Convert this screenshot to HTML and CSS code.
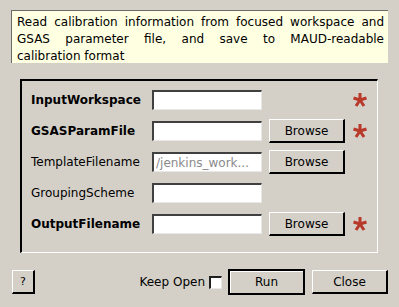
FILE: index.html
```html
<!DOCTYPE html>
<html lang="en">

<head>
    <meta charset="UTF-8">
    <title>SaveGSASInstrumentFile dialog</title>
    <link rel="stylesheet" href="styles.css">
</head>

<body>
    <div id="dialog">
        <p class="summary"><span class="full">Read calibration information from focused workspace and GSAS parameter file, and save to MAUD-readable</span>calibration format</p>

        <div class="group">
            <div class="form">
                <label class="req">InputWorkspace</label>
                <input type="text">
                <span></span>
                <span class="star"><svg viewBox="0 0 16 16"><path d="M8 1V8M8 8L14.5 6M8 8L12 14M8 8L4 14M8 8L1.5 6"/></svg></span>

                <label class="req">GSASParamFile</label>
                <input type="text">
                <button>Browse</button>
                <span class="star"><svg viewBox="0 0 16 16"><path d="M8 1V8M8 8L14.5 6M8 8L12 14M8 8L4 14M8 8L1.5 6"/></svg></span>

                <label>TemplateFilename</label>
                <input type="text" placeholder="/jenkins_work...">
                <button>Browse</button>
                <span></span>

                <label>GroupingScheme</label>
                <input type="text">
                <span></span>
                <span></span>

                <label class="req">OutputFilename</label>
                <input type="text">
                <button>Browse</button>
                <span class="star"><svg viewBox="0 0 16 16"><path d="M8 1V8M8 8L14.5 6M8 8L12 14M8 8L4 14M8 8L1.5 6"/></svg></span>
            </div>
        </div>

        <div class="footer">
            <button class="help">?</button>
            <span class="spacer"></span>
            <label class="keep">Keep Open <input type="checkbox"></label>
            <button class="run">Run</button>
            <button class="close">Close</button>
        </div>
    </div>
</body>

</html>
```

FILE: styles.css
```css
html {
    font-family: 'DejaVu Sans', sans-serif;
    font-size: 12px;
}

body {
    margin: 0;
    background: #d4d0c8;
    color: #000;
}

#dialog {
    display: flex;
    flex-direction: column;
    padding: 10px 11px 0 11px;
}

.summary {
    margin: 0;
    height: 53px;
    box-sizing: border-box;
    padding: 3px 4px 0 5px;
    line-height: 17px;
    text-align: justify;
    background: #ffffe1;
    border-top: 1px solid #6a6a6a;
    border-left: 1px solid #6a6a6a;
}

.summary .full {
    display: block;
    text-align-last: justify;
}

.group {
    margin: 16px 10px 0 9px;
    height: 174px;
    box-sizing: border-box;
    border-top: 2px solid #000;
    border-left: 2px solid #000;
    border-right: 1px solid #fff;
    border-bottom: 1px solid #fff;
    padding: 7px 0 0 9px;
}

.form {
    display: grid;
    grid-template-columns: 114px 110px 76px 22px;
    grid-auto-rows: 24px;
    column-gap: 7px;
    row-gap: 7px;
    align-items: center;
}

.form label {
    white-space: nowrap;
}

.form label.req {
    font-weight: bold;
}

input[type=text] {
    height: 20px;
    width: 110px;
    box-sizing: border-box;
    margin: 0;
    padding: 0 2px;
    font: inherit;
    background: #fff;
    border-top: 2px solid #404040;
    border-left: 2px solid #404040;
    border-right: 1px solid #e8e8e8;
    border-bottom: 1px solid #e8e8e8;
    outline: none;
}

input::placeholder {
    color: #8a8a8a;
}

button {
    height: 24px;
    box-sizing: border-box;
    margin: 0;
    padding: 0;
    font: inherit;
    color: #000;
    background: #d4d0c8;
    border-top: 1px solid #fff;
    border-left: 1px solid #fff;
    border-right: 2px solid #000;
    border-bottom: 2px solid #000;
}

.star {
    display: flex;
    align-items: center;
}

.star svg {
    width: 16px;
    height: 16px;
}

.star path {
    fill: none;
    stroke: #b8382a;
    stroke-width: 3;
}

.footer {
    display: flex;
    align-items: center;
    margin-top: 16px;
    height: 26px;
    padding-left: 1px;
}

.help {
    width: 23px;
    font-size: 11px;
}

.spacer {
    flex: 1;
}

.keep {
    display: flex;
    align-items: center;
    gap: 4px;
    margin-right: 6px;
}

.keep input {
    width: 13px;
    height: 13px;
    margin: 0;
    appearance: none;
    background: #fff;
    border-top: 2px solid #202020;
    border-left: 2px solid #202020;
    border-right: 1px solid #e8e8e8;
    border-bottom: 1px solid #e8e8e8;
}

.run {
    width: 77px;
    height: 26px;
    border: 2px solid #000;
    box-shadow: inset 1px 1px 0 #fff;
}

.close {
    width: 76px;
    margin-left: 7px;
}
```
